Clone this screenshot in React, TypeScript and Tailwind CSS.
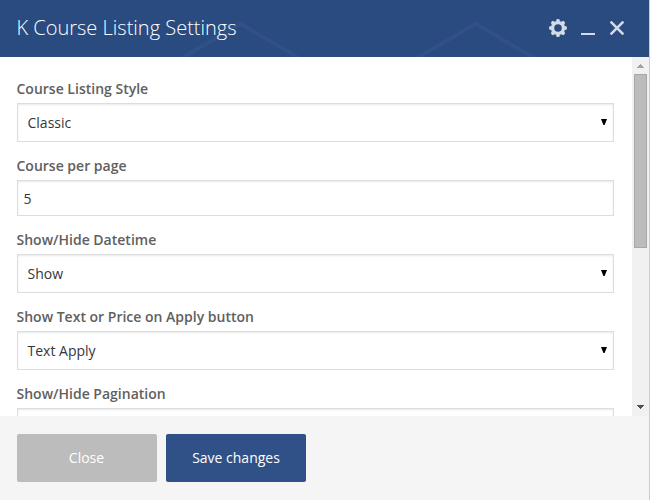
import type { ReactNode } from 'react';

function Field({ label, children }: { label: string; children: ReactNode }) {
  return (
    <div className="mb-3.5 shrink-0">
      <label className="mb-1 -ml-[0.5px] block h-5 text-[14px] leading-5 font-semibold text-[#606060]">{label}</label>
      {children}
    </div>
  );
}

const boxStyle = 'flex items-center border border-[#dddddd] bg-white text-[14px] text-[#32373c] shadow-[inset_0_1px_2px_rgba(0,0,0,0.09)]';

function SelectBox({ value }: { value?: string }) {
  return (
    <div className={`${boxStyle} h-[39px] justify-between pr-[6px] pl-[9.5px]`}>
      <span>{value}</span>
      <svg className="mb-px" width="6" height="6" viewBox="0 0 6 6">
        <path d="M0 0h6L3.600 6H2.400z" fill="#000" />
      </svg>
    </div>
  );
}

const toothAngles = [0, 45, 90, 135, 180, 225, 270, 315];

function GearIcon() {
  return (
    <svg className="mb-[2px]" width="18" height="18" viewBox="0 0 18 18" fill="#d4dbe7">
      <circle cx="9" cy="9" r="5.4" fill="none" stroke="#d4dbe7" strokeWidth="3.2" />
      {toothAngles.map((angle) => (
        <path key={angle} d="M6.800 2.800L7.600.3Q9-.1 10.400.3L11.200 2.800z" transform={`rotate(${angle} 9 9)`} />
      ))}
    </svg>
  );
}

export default function App() {
  return (
    <div className="flex h-[500px] w-[650px] flex-col overflow-hidden border-r border-[#cccccc] bg-white font-['Open_Sans',sans-serif]">
      <header className="relative h-[57px] shrink-0 bg-[#2a4b80]">
        <svg className="absolute inset-0" width="649" height="57" fill="none" stroke="#305087" strokeWidth="4">
          <path d="M171 64.500L240.500 23.700L310 64.500M406 64.500L475.700 23.700L545 64.500" />
        </svg>
        <div className="relative flex h-full items-center justify-between pr-[25px] pl-[16.500px]">
          <h1 className="mb-[2px] text-[20px] leading-7 font-light text-white">K Course Listing Settings</h1>
          <div className="flex items-center">
            <GearIcon />
            <span className="mt-[11px] ml-[14px] h-[2px] w-[14px] bg-[#d4dbe7]" />
            <svg className="mb-px ml-[15px]" width="14" height="14" viewBox="0 0 14 14" fill="none" stroke="#d4dbe7" strokeWidth="2.6" strokeLinecap="round">
              <path d="M1.400 1.400l11.200 11.200M12.600 1.400L1.400 12.600" />
            </svg>
          </div>
        </div>
      </header>

      <div className="flex h-[359px] shrink-0">
        <main className="flex flex-1 flex-col overflow-hidden pt-[22px] pr-[18px] pl-[17px]">
          <Field label="Course Listing Style">
            <SelectBox value="Classic" />
          </Field>
          <Field label="Course per page">
            <div className={`${boxStyle} h-9 px-[5.500px]`}>5</div>
          </Field>
          <Field label="Show/Hide Datetime">
            <SelectBox value="Show" />
          </Field>
          <Field label="Show Text or Price on Apply button">
            <SelectBox value="Text Apply" />
          </Field>
          <Field label="Show/Hide Pagination">
            <SelectBox />
          </Field>
        </main>
        <div className="flex w-[17px] flex-col items-center justify-between bg-[#f1f1f1] pb-[7px]">
          <div className="flex w-full flex-col items-center">
            <svg className="mt-[7px] mb-[6px]" width="7" height="4" shapeRendering="crispEdges">
              <path d="M3 0h1v1h1v1h1v1h1v1H0V3h1V2h1V1h1z" fill="#a3a3a3" />
            </svg>
            <div className="h-[174px] w-[13px] border border-[#a8a8a8] bg-[#bcbcbc]" />
          </div>
          <svg width="7" height="4" shapeRendering="crispEdges">
            <path d="M0 0h7v1H6v1H5v1H4v1H3V3H2V2H1V1H0z" fill="#505050" />
          </svg>
        </div>
      </div>

      <footer className="flex flex-1 gap-[9px] bg-[#f5f5f5] pt-[18px] pl-[17px] text-[14px] text-white">
        <button className="h-12 w-[140px] rounded-[2px] bg-[#bcbcbc] pr-px pb-[2px]">Close</button>
        <button className="h-12 w-[140px] rounded-[2px] bg-[#305188] pb-[2px]">Save changes</button>
      </footer>
    </div>
  );
}
